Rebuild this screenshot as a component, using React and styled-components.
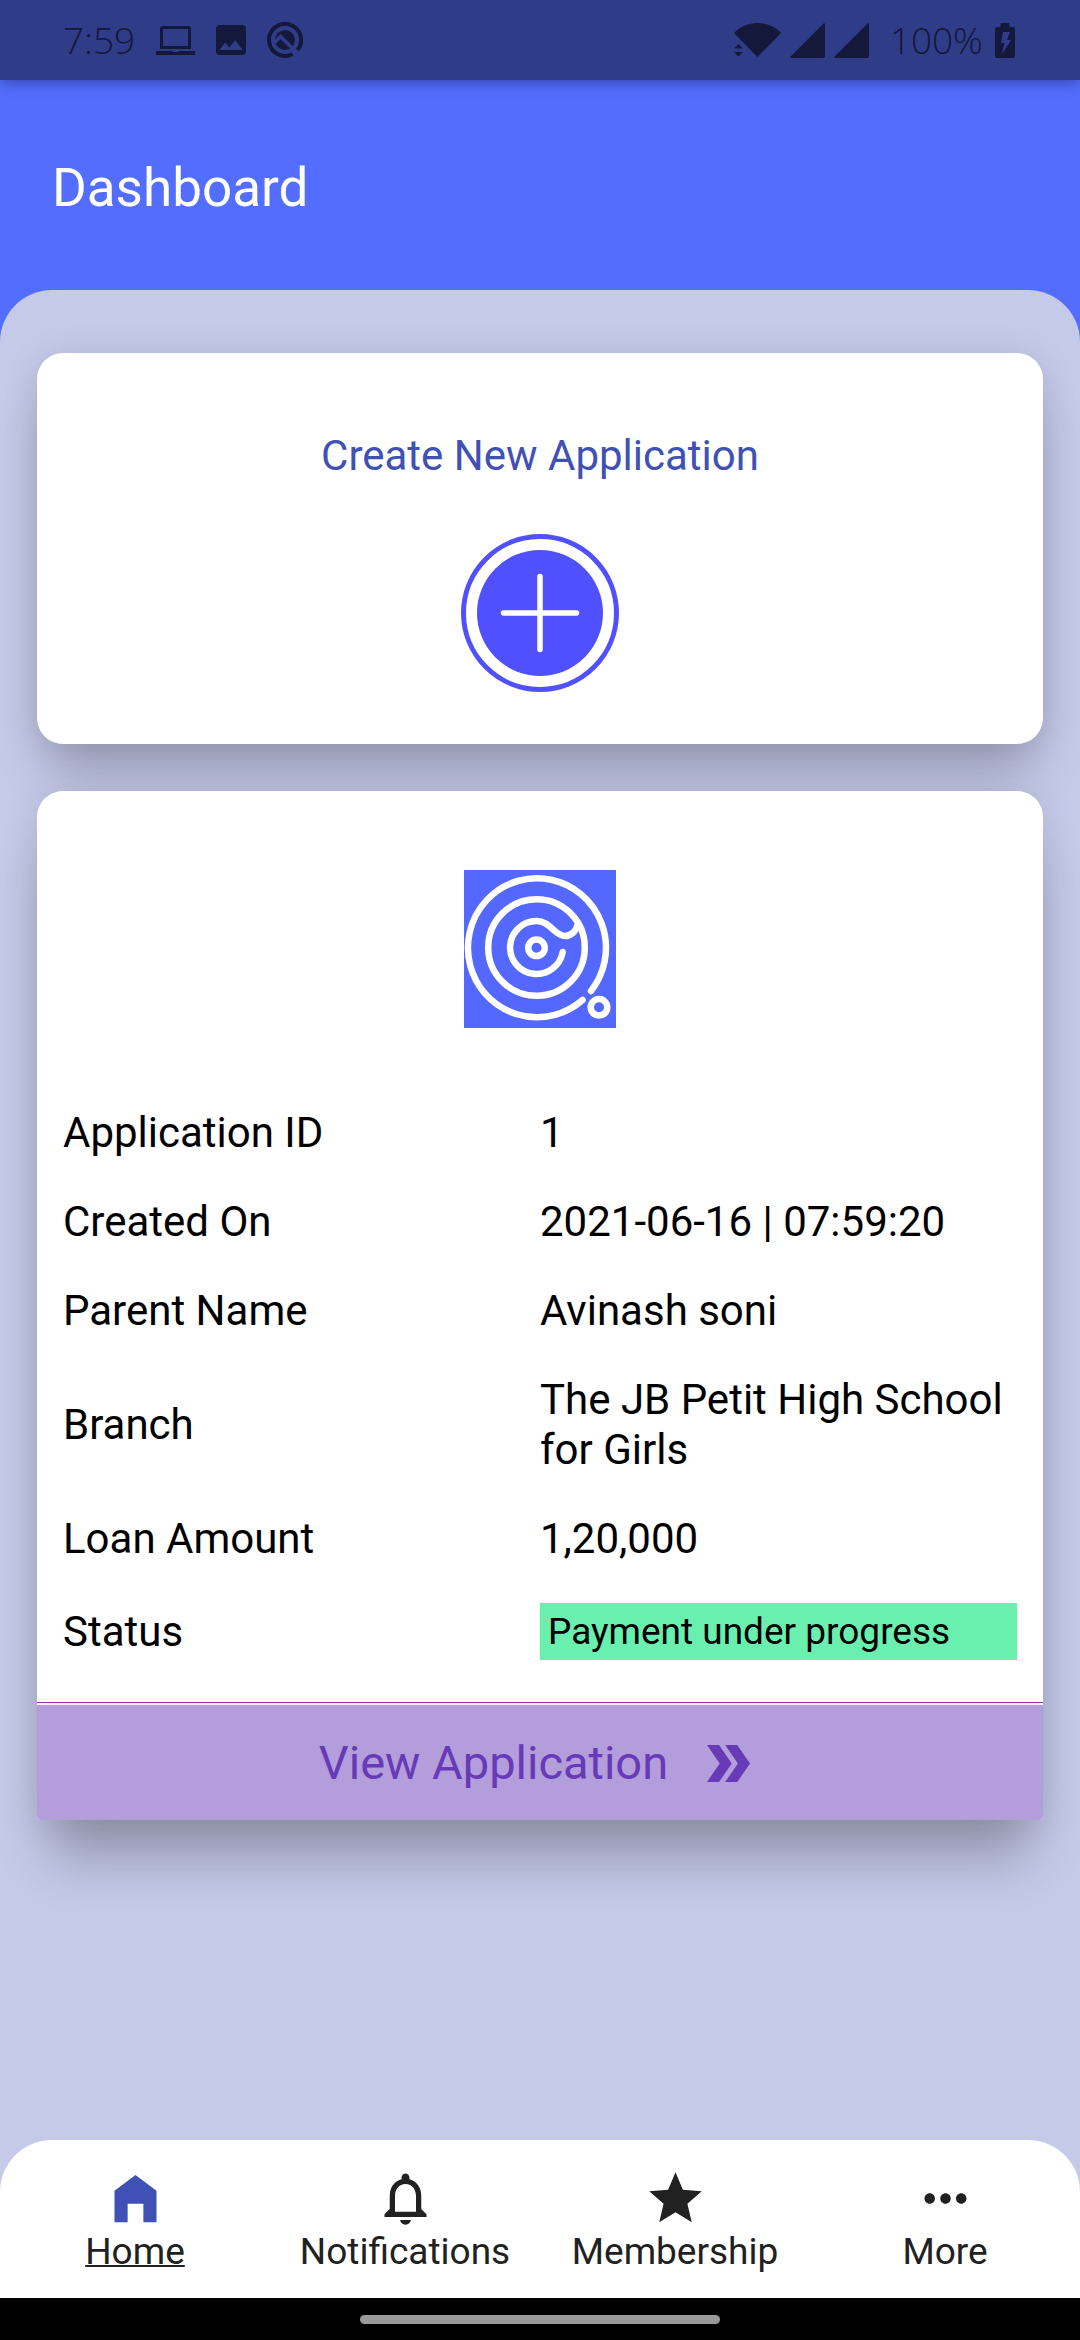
import React from "react";
import styled, { createGlobalStyle } from "styled-components";

const GlobalStyle = createGlobalStyle`
  *, *::before, *::after { box-sizing: border-box; }
  body { margin: 0; font-family: Roboto, "Noto Sans", sans-serif; }
  h1, h2, dl, dd { margin: 0; font-weight: 400; }
  button { border: 0; padding: 0; background: none; font: inherit; cursor: pointer; }
  svg { display: block; flex: none; }
`;

const Screen = styled.div`
  display: flex;
  flex-direction: column;
  min-height: 100vh;
  background: #536dfe;
`;

const StatusBar = styled.div`
  display: flex;
  align-items: center;
  justify-content: space-between;
  height: 80px;
  padding: 0 65px 0 63px;
  background: #2f3c88;
  color: #14183a;
  font: 300 37px/48px "Open Sans", "Noto Sans", sans-serif;
  box-shadow: 0 2px 14px rgba(0, 0, 0, 0.36);
`;

const StatusGroup = styled.div`
  display: flex;
  align-items: center;
  gap: ${(p) => p.$gap}px;
`;

const Header = styled.header`
  padding: 77px 52px 71px;
`;

const PageTitle = styled.h1`
  color: #fff;
  font-size: 53px;
  line-height: 62px;
`;

const Content = styled.main`
  display: flex;
  flex: 1;
  flex-direction: column;
  gap: 47px;
  padding: 63px 37px;
  border-radius: 52px 52px 0 0;
  background: #c5cae9;
`;

const Card = styled.section`
  display: flex;
  flex-direction: column;
  align-items: center;
  background: #fff;
`;

const CreateCard = styled(Card)`
  gap: 53px;
  padding: 78px 26px 52px;
  border-radius: 26px;
  box-shadow: 0 40px 52px -10px rgba(0, 0, 0, 0.2), 0 4px 36px rgba(0, 0, 0, 0.12);
`;

const ApplicationCard = styled(Card)`
  border-radius: 26px 26px 4px 4px;
  box-shadow: 0 54px 54px -14px rgba(0, 0, 0, 0.24), 0 4px 36px rgba(0, 0, 0, 0.12);
`;

const CreateTitle = styled.h2`
  color: #3f51b5;
  font-size: 42px;
  line-height: 50px;
`;

const Summary = styled.div`
  display: flex;
  flex-direction: column;
  align-items: center;
  align-self: stretch;
  gap: 80px;
  padding: 79px 26px 42px;
`;

const Details = styled.dl`
  display: flex;
  flex-direction: column;
  align-self: stretch;
  gap: 39px;
  color: #000;
  font-size: 42px;
  line-height: 50px;
`;

const DetailRow = styled.div`
  display: grid;
  grid-template-columns: 1fr 1fr;
  align-items: center;
`;

const StatusChip = styled.dd`
  padding: 7px 8px 6px;
  background: #69f0ae;
  font-size: 37px;
  line-height: 44px;
`;

const ViewButton = styled.button`
  display: flex;
  align-items: center;
  justify-content: center;
  align-self: stretch;
  gap: 39px;
  padding: 30px 26px 29px;
  border-radius: 0 0 4px 4px;
  background: #b39ddb;
  color: #673ab7;
  font-size: 47px;
  line-height: 56px;
`;

const Divider = styled.hr`
  align-self: stretch;
  height: 3px;
  margin: 0;
  border: 0;
  border-top: 1px solid #8a3a98;
  background: #fbf4fc;
`;

const NavShell = styled.div`
  background: #c5cae9;
`;

const Nav = styled.nav`
  display: grid;
  grid-template-columns: repeat(4, 1fr);
  padding: 27px 0 24px;
  border-radius: 52px 52px 0 0;
  background: #fff;
`;

const NavLink = styled.a`
  display: flex;
  flex-direction: column;
  align-items: center;
  color: #212121;
  font-size: 37px;
  line-height: 44px;
  text-decoration: ${(p) => (p.$active ? "underline" : "none")};
  text-decoration-thickness: 2px;

  svg { fill: ${(p) => (p.$active ? "#3f51b5" : "#212121")}; }
`;

const GestureBar = styled.div`
  display: flex;
  justify-content: center;
  padding: 17px 0 16px;
  background: #000;
`;

const GestureHandle = styled.div`
  width: 33.3333%;
  height: 9px;
  border-radius: 5px;
  background: #999;
`;

const LaptopIcon = () => (
  <svg width="39" height="30" viewBox="0 0 39 30" fill="currentColor" aria-hidden="true">
    <path fillRule="evenodd" d="M7 1h25a3 3 0 0 1 3 3v20H4V4a3 3 0 0 1 3-3zM7 4v17h25V4z" />
    <path d="M0 26h16l1 1h5l1-1h16v4H0z" />
  </svg>
);

const ImageIcon = () => (
  <svg width="30" height="30" viewBox="3 3 18 18" fill="currentColor" aria-hidden="true">
    <path d="M21 19V5c0-1.1-.9-2-2-2H5c-1.1 0-2 .9-2 2v14c0 1.1.9 2 2 2h14c1.1 0 2-.9 2-2zM8.5 13.5l2.5 3.01L14.5 12l4.5 6H5l3.5-4.5z" />
  </svg>
);

const AndroidQIcon = () => (
  <svg width="36" height="36" viewBox="0 0 36 36" aria-hidden="true">
    <path d="M30.5 28A16 16 0 1 0 25.5 32.1" fill="none" stroke="currentColor" strokeWidth="4" />
    <circle cx="18" cy="18" r="10" fill="currentColor" />
    <path d="M7 21l6.5-6.5L31 32" fill="none" stroke="#2f3c88" strokeWidth="3.5" />
  </svg>
);

const WifiIcon = () => (
  <svg width="47" height="34" viewBox="0 0 47 34" fill="currentColor" aria-hidden="true">
    <path d="M0 10C6 3.5 14.5 0 23.5 0S41 3.5 47 10L23.5 34z" />
    <path d="M0 25.5L4.5 21L9 25.5zM0 29h9l-4.5 4.5z" />
  </svg>
);

const SignalIcon = () => (
  <svg width="35" height="35" viewBox="0 0 35 35" fill="currentColor" aria-hidden="true">
    <path d="M33.5.6c.6-.6 1.5-.2 1.5.7V33a2 2 0 0 1-2 2H1.3c-.9 0-1.3-.9-.7-1.5z" />
  </svg>
);

const BatteryIcon = () => (
  <svg width="20" height="35" viewBox="0 0 20 35" fill="currentColor" aria-hidden="true">
    <path fillRule="evenodd" d="M5.5 0h9v4H18a2 2 0 0 1 2 2v27a2 2 0 0 1-2 2H2a2 2 0 0 1-2-2V6a2 2 0 0 1 2-2h3.500zM8 9L6 20h3.500L6.500 32L16 17h-4l3-8z" />
  </svg>
);

const AddIcon = () => (
  <svg width="158" height="158" viewBox="0 0 158 158" aria-hidden="true">
    <circle cx="79" cy="79" r="76.5" fill="none" stroke="#5050ff" strokeWidth="5" />
    <circle cx="79" cy="79" r="63" fill="#5050ff" />
    <path d="M79 42.5v73M42.5 79h73" stroke="#fff" strokeWidth="5.5" strokeLinecap="round" />
  </svg>
);

const SchoolLogo = () => (
  <svg width="152" height="158" viewBox="0 0 152 158" role="img" aria-label="School logo">
    <rect width="152" height="158" fill="#5468ff" />
    <g fill="none" stroke="#fff" strokeWidth="6.5" strokeLinecap="round">
      <path d="M127 121A69 69.5 0 1 0 118.5 130" />
      <circle cx="72.5" cy="77.5" r="48.3" />
      <path d="M98.7 82A26.500 26.500 0 1 1 72.500 51C86 51 91 66 101 66C106 66 112 62 113.500 55" />
      <circle cx="72.5" cy="77.8" r="8.3" />
      <circle cx="135" cy="137.3" r="8.3" />
    </g>
  </svg>
);

const ChevronsIcon = () => (
  <svg width="54" height="37" viewBox="0 0 54 37" fill="currentColor" aria-hidden="true">
    <path d="M0 0h12l12.8 18.5L12 37H0l12.7-18.5zM18.2 0h12L43 18.5L30.2 37h-12l12.7-18.5z" />
  </svg>
);

const details = [
  ["Application ID", "1"],
  ["Created On", "2021-06-16 | 07:59:20"],
  ["Parent Name", "Avinash soni"],
  ["Branch", "The JB Petit High School for Girls"],
  ["Loan Amount", "1,20,000"],
];

const navItems = [
  { label: "Home", active: true, path: "M12 3l8 6v12h-5v-7H9v7H4V9z" },
  {
    label: "Notifications",
    path: "M12 22c1.1 0 2-.9 2-1.800h-4c0 .9.9 1.800 2 1.800zm6-6v-5c0-3.070-1.630-5.640-4.500-6.320V4c0-.830-.670-1.500-1.500-1.500s-1.500.670-1.500 1.500v.680C7.640 5.360 6 7.920 6 11v5l-2 2v1h16v-1l-2-2zm-2 1H8v-6c0-2.480 1.510-4.500 4-4.500s4 2.020 4 4.500v6z",
  },
  {
    label: "Membership",
    path: "M12 17.27L18.18 21l-1.64-7.03L22 9.24l-7.19-.61L12 2 9.19 8.63 2 9.24l5.46 4.73L5.82 21z",
  },
  {
    label: "More",
    path: "M6 10c-1.1 0-2 .9-2 2s.9 2 2 2 2-.9 2-2-.9-2-2-2zm12 0c-1.1 0-2 .9-2 2s.9 2 2 2 2-.9 2-2-.9-2-2-2zm-6 0c-1.1 0-2 .9-2 2s.9 2 2 2 2-.9 2-2-.9-2-2-2z",
  },
];

export default function App() {
  return (
    <Screen>
      <GlobalStyle />
      <StatusBar>
        <StatusGroup $gap={21}>
          <span>7:59</span>
          <LaptopIcon />
          <ImageIcon />
          <AndroidQIcon />
        </StatusGroup>
        <StatusGroup $gap={21}>
          <StatusGroup $gap={9}>
            <WifiIcon />
            <SignalIcon />
            <SignalIcon />
          </StatusGroup>
          <StatusGroup $gap={12}>
            <span>100%</span>
            <BatteryIcon />
          </StatusGroup>
        </StatusGroup>
      </StatusBar>
      <Header>
        <PageTitle>Dashboard</PageTitle>
      </Header>
      <Content>
        <CreateCard>
          <CreateTitle>Create New Application</CreateTitle>
          <button type="button" aria-label="Create new application">
            <AddIcon />
          </button>
        </CreateCard>
        <ApplicationCard>
          <Summary>
            <SchoolLogo />
            <Details>
              {details.map(([term, value]) => (
                <DetailRow key={term}>
                  <dt>{term}</dt>
                  <dd>{value}</dd>
                </DetailRow>
              ))}
              <DetailRow>
                <dt>Status</dt>
                <StatusChip>Payment under progress</StatusChip>
              </DetailRow>
            </Details>
          </Summary>
          <Divider />
          <ViewButton type="button">
            View Application
            <ChevronsIcon />
          </ViewButton>
        </ApplicationCard>
      </Content>
      <NavShell>
        <Nav aria-label="Main">
          {navItems.map((item) => (
            <NavLink
              key={item.label}
              href={`#${item.label.toLowerCase()}`}
              $active={item.active}
              aria-current={item.active ? "page" : undefined}
            >
              <svg width="63" height="63" viewBox="0 0 24 24" aria-hidden="true">
                <path d={item.path} />
              </svg>
              {item.label}
            </NavLink>
          ))}
        </Nav>
      </NavShell>
      <GestureBar>
        <GestureHandle />
      </GestureBar>
    </Screen>
  );
}
